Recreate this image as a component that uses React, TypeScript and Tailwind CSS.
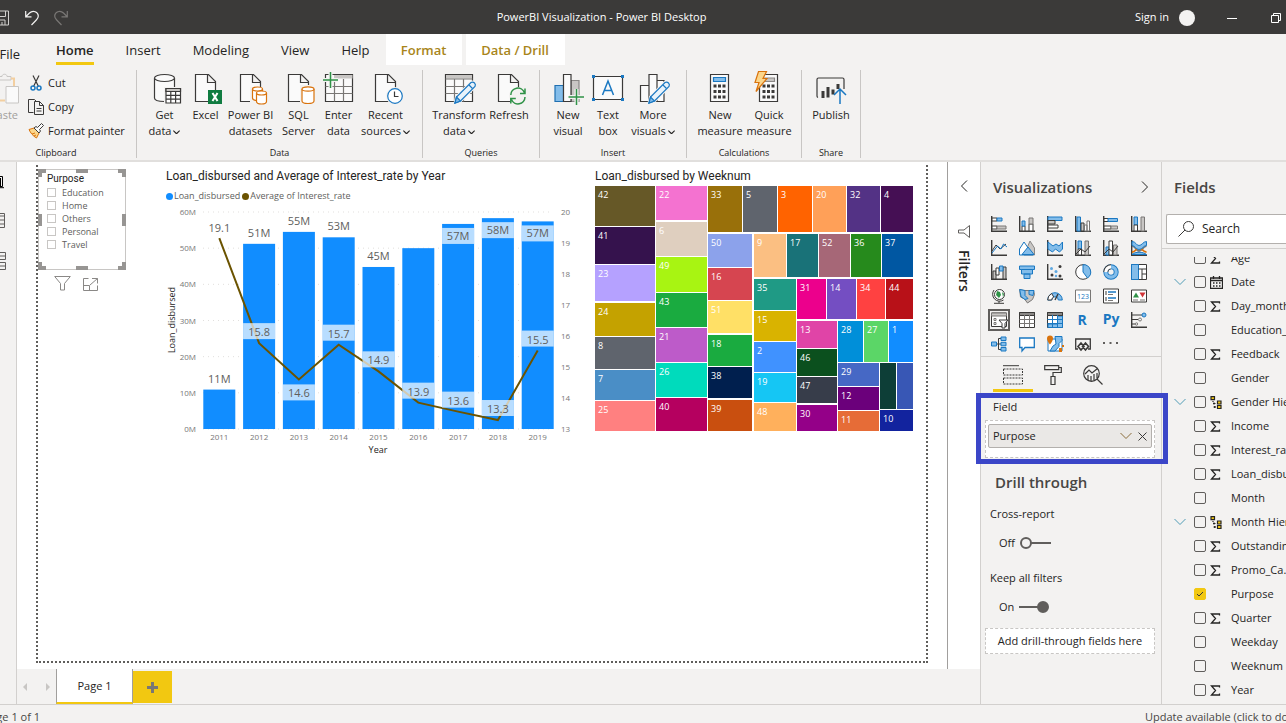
import type { ReactNode } from "react";

const DARK = "#3b3a39";
const BLUE = "#1a78c2";
const SKY = "#83bdea";
const GREY = "#c8c6c4";
const ORANGE = "#d9730d";
const GREEN = "#2f9247";

const TABS = ["Home", "Insert", "Modeling", "View", "Help"];

function Chevron({ className = "" }: { className?: string }) {
  return (
    <svg viewBox="0 0 12 8" fill="none" stroke="currentColor" className={className}>
      <path d="M.5 1l5.500 5.500L11.500 1" />
    </svg>
  );
}

function Big({ children }: { children: ReactNode }) {
  return (
    <svg width="32" height="32" viewBox="0 0 32 32" fill="none" stroke={DARK} strokeWidth="1.2" className="shrink-0 overflow-visible">
      {children}
    </svg>
  );
}

const page = <path d="M5.500 2.500h13l7 7v20h-20zM17.500 2.500v8h8" fill="#fafafa" />;

const calculator = (
  <>
    <path d="M6.500 2.500h18v27h-18z" fill="#fafafa" />
    <path d="M9.500 12.500h3v3h-3zM14 12.500h3v3h-3zM18.500 12.500h3v3h-3zM9.500 18h3v3h-3zM14 18h3v3h-3zM18.500 18h3v3h-3zM9.500 23.500h3v3h-3zM14 23.500h3v3h-3zM18.500 23.500h3v3h-3z" fill={DARK} stroke="none" />
  </>
);

const pencil = (
  <>
    <path d="M12 31l1.500-6L28 10.500q2-1 3.500.5t.5 3.500L17.500 29z" fill="#fff" stroke="#f3f2f1" strokeWidth="3" />
    <path d="M12 31l1.500-6L28 10.500q2-1 3.500.5t.5 3.500L17.500 29z" fill="#e8f3fb" stroke={BLUE} />
    <path d="M12 31l1.500-6 4 4zM26 13l3.500 3.500" fill={SKY} stroke={BLUE} />
  </>
);

const ICONS: Record<string, ReactNode> = {
  getData: (
    <Big>
      <path d="M5.500 6v20c0 2 4 3.500 10 3.500s10-1.500 10-3.500V6" fill="#fafafa" />
      <ellipse cx="15.500" cy="6" rx="10" ry="3.500" fill="#fafafa" />
      <path d="M15 15h18v18H15z" fill="#f3f2f1" stroke="none" />
      <path d="M17 16.500h14.500v14.500H17z" fill="#fff" />
      <path d="M17 16.500h14.500v3H17z" fill={GREY} />
      <path d="M17 23.300h14.500M17 27.100h14.500M21.800 19.500v11.500M26.600 19.500v11.500" />
    </Big>
  ),
  excel: (
    <Big>
      {page}
      <path d="M18 18h14v14H18z" fill="#107c41" stroke="none" />
      <path d="M22.500 21l5 8M27.500 21l-5 8" stroke="#fff" strokeWidth="2" />
    </Big>
  ),
  datasets: (
    <Big>
      {page}
      <path d="M15 15h18v18H15z" fill="#f3f2f1" stroke="none" />
      <g fill="#fff" stroke={ORANGE}>
        <path d="M17.500 17v9c0 1.500 2 2.500 5 2.500s5-1 5-2.500v-9" />
        <ellipse cx="22.500" cy="17" rx="5" ry="2" />
        <path d="M21.500 21v8.500c0 1.500 2 2.500 5 2.500s5-1 5-2.500V21" />
        <ellipse cx="26.500" cy="21" rx="5" ry="2" />
      </g>
    </Big>
  ),
  sql: (
    <Big>
      {page}
      <path d="M17 13h16v19H17z" fill="#f3f2f1" stroke="none" />
      <path d="M19 17v12c0 1.500 2.500 2.500 6 2.500s6-1 6-2.500V17" fill="#fff" stroke={ORANGE} />
      <ellipse cx="25" cy="17" rx="6" ry="2.200" fill="#fff" stroke={ORANGE} />
    </Big>
  ),
  enter: (
    <Big>
      <path d="M2.500 2.500h27v27h-27z" fill="#fafafa" />
      <path d="M11 3h18.500v3.500H11z" fill={GREY} stroke="none" />
      <path d="M2.500 14.500h27M2.500 21.500h27M11.500 7v22.500M20.500 7v22.500" stroke="#797775" />
      <path d="M7.500 0v16M0 8h15" stroke="#f3f2f1" strokeWidth="4" />
      <path d="M7.500 0v16M0 8h15" stroke={GREEN} strokeWidth="1.500" />
    </Big>
  ),
  recent: (
    <Big>
      {page}
      <circle cx="25" cy="24" r="9" fill="#f3f2f1" stroke="none" />
      <circle cx="25" cy="24" r="7.300" fill="#fff" stroke={BLUE} />
      <path d="M24.500 19.500v5h4" stroke={DARK} />
    </Big>
  ),
  transform: (
    <Big>
      <path d="M2.500 2.500h27v27h-27z" fill="#fafafa" />
      <path d="M3 3h26v3.500H3z" fill={GREY} stroke="none" />
      <path d="M2.500 7h27M2.500 14.500h27M2.500 21.500h27M11.500 7v22.500M20.500 7v22.500" stroke="#797775" />
      {pencil}
    </Big>
  ),
  refresh: (
    <Big>
      {page}
      <circle cx="25" cy="24" r="9" fill="#f3f2f1" stroke="none" />
      <path d="M17.800 23a7 7 0 0 1 13.500-2.500M32 16.500v5h-5M32 25a7 7 0 0 1-13.500 2.500M17.800 31.500v-5h5" stroke={GREEN} strokeWidth="1.500" />
    </Big>
  ),
  newVisual: (
    <Big>
      <path d="M19 8.500h8v21h-8z" fill={GREY} stroke="#8a8886" />
      <path d="M3 13.500h8.500v16H3z" fill={SKY} stroke="#1f6fb0" />
      <path d="M11.500 2.500H19v27h-7.500z" fill="#fafafa" />
      <path d="M24.500 17v16M17 25h15" stroke="#f3f2f1" strokeWidth="4" />
      <path d="M24.500 17v16M16.500 25H32" stroke={GREEN} strokeWidth="1.500" />
    </Big>
  ),
  textBox: (
    <Big>
      <path d="M1.500 4.500h29v23h-29z" fill="#fafafa" />
      <path d="M0 3h3v3H0zM29 3h3v3h-3zM0 26h3v3H0zM29 26h3v3h-3z" fill={BLUE} stroke="none" />
      <path d="M10.500 23l5.500-14 5.500 14M12.500 18.500h7" stroke={BLUE} strokeWidth="1.500" />
    </Big>
  ),
  moreVisuals: (
    <Big>
      <path d="M20 8.500h7v21h-7zM3.500 13.500H12v16H3.500zM12 2.500h8v27h-8z" fill="#fafafa" />
      {pencil}
    </Big>
  ),
  newMeasure: (
    <Big>
      {calculator}
      <path d="M9.500 5.500h12v4h-12z" fill={SKY} stroke={BLUE} />
    </Big>
  ),
  quickMeasure: (
    <Big>
      {calculator}
      <path d="M11 6h10.500v3.500H11z" fill={GREY} stroke="#8a8886" />
      <path d="M5.500-.5h8l-3.500 7h4L3 19.500 6 10.500H2z" fill="#fbd68b" stroke={ORANGE} />
    </Big>
  ),
  publish: (
    <Big>
      <path d="M3 25.500a1.500 1.500 0 0 1-1-1.500V7.500A1.500 1.500 0 0 1 3.500 6h24A1.500 1.500 0 0 1 29 7.500V17" />
      <path d="M8 19v7M13 15v10.500M18 17.500v5M23 12v5" strokeWidth="3" />
      <path d="M25 32V17M19 23l6-6 6 6" stroke={BLUE} strokeWidth="1.500" />
    </Big>
  ),
};

type Cmd = { icon: string; lines: string[]; width: string; menu?: boolean };

const GROUPS: { label: string; width: string; items: Cmd[] }[] = [
  {
    label: "Data",
    width: "w-[286px]",
    items: [
      { icon: "getData", lines: ["Get", "data"], width: "w-[42px]", menu: true },
      { icon: "excel", lines: ["Excel"], width: "w-[40px]" },
      { icon: "datasets", lines: ["Power BI", "datasets"], width: "w-[50px]" },
      { icon: "sql", lines: ["SQL", "Server"], width: "w-[46px]" },
      { icon: "enter", lines: ["Enter", "data"], width: "w-[34px]" },
      { icon: "recent", lines: ["Recent", "sources"], width: "w-[60px]", menu: true },
    ],
  },
  {
    label: "Queries",
    width: "w-[117px]",
    items: [
      { icon: "transform", lines: ["Transform", "data"], width: "w-[56px]", menu: true },
      { icon: "refresh", lines: ["Refresh"], width: "w-[44px]" },
    ],
  },
  {
    label: "Insert",
    width: "w-[147px]",
    items: [
      { icon: "newVisual", lines: ["New", "visual"], width: "w-[40px]" },
      { icon: "textBox", lines: ["Text", "box"], width: "w-[40px]" },
      { icon: "moreVisuals", lines: ["More", "visuals"], width: "w-[50px]", menu: true },
    ],
  },
  {
    label: "Calculations",
    width: "w-[115px]",
    items: [
      { icon: "newMeasure", lines: ["New", "measure"], width: "w-[50px]" },
      { icon: "quickMeasure", lines: ["Quick", "measure"], width: "w-[48px]" },
    ],
  },
  { label: "Share", width: "w-[59px]", items: [{ icon: "publish", lines: ["Publish"], width: "w-[48px]" }] },
];

function TitleBar() {
  return (
    <header className="flex h-[34px] shrink-0 items-center justify-between bg-[#3b3a39] pt-px text-[11px] text-white">
      <div className="flex w-[68px] items-center justify-between">
        <svg width="9" height="16" viewBox="7 0 9 16" fill="none" stroke="#d2d0ce">
          <path d="M1 1h14.500v14H1zM4 1v5.500h8.500V1M5 15v-5h7v5M9 12v3" />
        </svg>
        <svg width="14" height="16" viewBox="0 0 14 16" fill="none" stroke="#f3f2f1" strokeWidth="1.200">
          <path d="M.7 1v5.800h5.800M1 6.500L4.500 3C8-.5 13.300 2 13.300 6c0 2-1 3-2 4L6.500 15" />
        </svg>
        <svg width="14" height="16" viewBox="0 0 14 16" fill="none" stroke="#797775" strokeWidth="1.200">
          <path d="M13.300 1v5.800H7.500M13 6.500L9.500 3C6-.5.700 2 .700 6c0 2 1 3 2 4L7.500 15" />
        </svg>
      </div>
      <h1>PowerBI Visualization - Power BI Desktop</h1>
      <div className="flex items-center">
        <button>Sign in</button>
        <span className="ml-2.5 size-4 rounded-full bg-[#f3f2f1]" />
        <button aria-label="Minimize" className="ml-8">
          <svg width="10" height="10" viewBox="0 0 10 10" stroke="#fff"><path d="M0 5.500h10" /></svg>
        </button>
        <button aria-label="Restore" className="ml-[34px] mr-[5px]">
          <svg width="10" height="10" viewBox="0 0 10 10" fill="none" stroke="#fff"><path d="M.5 2.500h7v7h-7zM2.500 2.500v-2h7v7h-2" /></svg>
        </button>
      </div>
    </header>
  );
}

function TabStrip() {
  return (
    <nav className="flex h-[31px] shrink-0 text-[13px] leading-5">
      <div className="flex w-5 items-center justify-end pt-2">
        <button>File</button>
      </div>
      <div className="ml-9 flex gap-8">
        {TABS.map(t => (
          <button
            key={t}
            className={t === "Home" ? "border-b-[3px] border-[#f2c811] pt-1 font-semibold" : "border-b-[3px] border-transparent pt-1"}
          >
            {t}
          </button>
        ))}
      </div>
      <button className="ml-4 w-[76px] bg-white font-semibold text-[#a8851a]">Format</button>
      <button className="ml-1 w-[99px] bg-white font-semibold text-[#a8851a]">Data / Drill</button>
    </nav>
  );
}

function Clipboard() {
  return (
    <section className="flex w-[137px] shrink-0 flex-col border-r border-[#c8c6c4]">
      <div className="flex flex-1">
        <button disabled className="flex w-[20px] flex-col items-end overflow-hidden pt-0.5 text-[#a19f9d]">
          <svg width="21" height="32" viewBox="11 0 21 32" fill="none" stroke="#c8c6c4" className="shrink-0">
            <path d="M11 7V4.500h3c0-3 5-3 5 0h4V8H11M11 28.500h3" />
            <path d="M23 6.500h3V14M11 28.500h6" stroke="#f3cfa0" strokeWidth="2" />
            <path d="M18 14.500h12.500v16.500H18z" fill="#fafafa" />
          </svg>
          <span className="pr-0.5 pt-[3px] leading-4">Paste</span>
        </button>
        <div className="ml-2 flex flex-col pt-px">
          <button className="flex h-6 items-center gap-1">
            <svg width="16" height="16" viewBox="0 0 16 16" fill="none" stroke={DARK} strokeWidth="1.200">
              <path d="M5 .5l5.500 11M11 .5L5.500 11.500" />
              <circle cx="5" cy="13" r="2" stroke={BLUE} strokeWidth="1.500" />
              <circle cx="11" cy="13" r="2" stroke={BLUE} strokeWidth="1.500" />
            </svg>
            Cut
          </button>
          <button className="flex h-6 items-center gap-1">
            <svg width="16" height="16" viewBox="0 0 16 16" fill="none" stroke={DARK}>
              <path d="M5.500 13.500h-5V.5h6l1.500 1.500M6.500 2.500h5l4 4v9h-9zM11.500 2.500v4h4M8.500 9.500h5M8.500 12h5" />
            </svg>
            Copy
          </button>
          <button className="flex h-6 items-center gap-1">
            <svg width="16" height="16" viewBox="0 0 16 16" fill="none" stroke={DARK}>
              <path d="M1 6.500l5-1.500 5 5-2.500 5C5 13 2.500 10 1 6.500z" fill="#fbd68b" stroke={ORANGE} />
              <path d="M4 11l3-1M6 13l2-1" stroke={ORANGE} />
              <path d="M6 5l2-1.500 1.500 1L13.500.5l2 2-4 4 1 1.500-1.500 2z" fill="#fafafa" />
            </svg>
            Format painter
          </button>
        </div>
      </div>
      <h2 className="pr-6 text-center text-[9px] leading-[10px]">Clipboard</h2>
    </section>
  );
}

function Ribbon() {
  return (
    <div className="flex h-[97px] shrink-0 border-b-2 border-[#e1dfdd] pb-0.5 pt-[5px] text-[11px]">
      <Clipboard />
      {GROUPS.map(g => (
        <section key={g.label} className={`flex shrink-0 flex-col border-r border-[#c8c6c4] ${g.width}`}>
          <div className="flex flex-1 justify-center pt-0.5">
            {g.items.map(c => (
              <button key={c.icon} className={`flex flex-col items-center whitespace-nowrap leading-4 ${c.width}`}>
                {ICONS[c.icon]}
                <span className="pt-[3px]">{c.lines[0]}</span>
                <span className="flex items-center gap-0.5">
                  {c.lines[1]}
                  {c.menu && <Chevron className="mt-0.5 w-[7px] stroke-2" />}
                </span>
              </button>
            ))}
          </div>
          <h2 className="text-center text-[9px] leading-[10px]">{g.label}</h2>
        </section>
      ))}
    </div>
  );
}

function ViewNav() {
  return (
    <nav className="flex w-[17px] shrink-0 flex-col items-start gap-6 border-r border-[#d2d0ce] pt-[13px]">
      <button aria-label="Report">
        <svg width="6" height="14" viewBox="0 0 6 14" fill="none" stroke="#000"><path d="M0 1.500h2.500v10H0M.5 3v8M0 12.700h4" /></svg>
      </button>
      <button aria-label="Data">
        <svg width="6" height="15" viewBox="0 0 6 15" fill="none" stroke="#605e5c"><path d="M0 .5h4.500v14H0M0 3h4.500M0 7h4.500M0 11h4.500" /></svg>
      </button>
      <button aria-label="Model">
        <svg width="6" height="18" viewBox="0 0 6 18" fill="none" stroke="#605e5c"><path d="M0 .5h5.500v7H0M0 4h5.500M0 10.500h5.500v7H0M0 14h5.500" /></svg>
      </button>
    </nav>
  );
}

const PURPOSES = ["Education", "Home", "Others", "Personal", "Travel"];

function Slicer() {
  return (
    <div className="w-[88px] shrink-0 pt-1">
      <fieldset className="relative h-[101px] border border-[#c8c6c4] px-2 pt-px text-[9px]">
        <h3 className="font-[Roboto] text-[10px] leading-[15px] text-[#252423]">Purpose</h3>
        {PURPOSES.map(p => (
          <label key={p} className="flex h-[13px] items-center gap-[6px] text-[#605e5c]">
            <input type="checkbox" className="size-[9px] appearance-none border border-[#c8c6c4]" />
            {p}
          </label>
        ))}
        <span className="absolute -left-px -top-px size-2 border-l-4 border-t-4 border-[#979593]" />
        <span className="absolute -right-px -top-px size-2 border-r-4 border-t-4 border-[#979593]" />
        <span className="absolute -bottom-px -left-px size-2 border-b-4 border-l-4 border-[#979593]" />
        <span className="absolute -bottom-px -right-px size-2 border-b-4 border-r-4 border-[#979593]" />
        <span className="absolute -top-px left-[37px] h-1 w-3 bg-[#979593]" />
        <span className="absolute -bottom-px left-[37px] h-1 w-3 bg-[#979593]" />
        <span className="absolute -left-px top-[44px] h-3 w-1 bg-[#979593]" />
        <span className="absolute -right-px top-[44px] h-3 w-1 bg-[#979593]" />
      </fieldset>
      <div className="flex gap-3 pl-4 pt-1.5">
        <button aria-label="Filters on visual">
          <svg width="17" height="16" viewBox="0 0 17 16" fill="none" stroke="#8a8886"><path d="M.7.500h15.600L10.500 7.500v6.500h-4V7.500z" /></svg>
        </button>
        <button aria-label="Focus mode">
          <svg width="16" height="16" viewBox="0 0 16 16" fill="none" stroke="#8a8886"><path d="M5.500 2.500h-5v12h14V9.500M.5 9.500h6v5M9 2.500h5.500v5M14.500 2.500L7 9" /></svg>
        </button>
      </div>
    </div>
  );
}

// rateBelow puts the line's label under its point
const YEARS = [
  { year: 2011, loan: 10.9, loanLabel: "11M", rate: 19.16, rateLabel: "19.1" },
  { year: 2012, loan: 51.2, loanLabel: "51M", rate: 15.77, rateLabel: "15.8" },
  { year: 2013, loan: 54.5, loanLabel: "55M", rate: 14.6, rateLabel: "14.6", rateBelow: true },
  { year: 2014, loan: 53, loanLabel: "53M", rate: 15.72, rateLabel: "15.7" },
  { year: 2015, loan: 44.8, loanLabel: "45M", rate: 14.86, rateLabel: "14.9" },
  { year: 2016, loan: 50, loanLabel: "", rate: 13.85, rateLabel: "13.9" },
  { year: 2017, loan: 56.7, loanLabel: "57M", rate: 13.56, rateLabel: "13.6" },
  { year: 2018, loan: 58.3, loanLabel: "58M", rate: 13.29, rateLabel: "13.3" },
  { year: 2019, loan: 57.4, loanLabel: "57M", rate: 15.53, rateLabel: "15.5" },
];

const barX = (i: number) => 53.3 + i * 39.8;
const loanY = (v: number) => 223 - (v * 217) / 60;
const rateY = (v: number) => 223 - (v - 13) * 31;

function ComboChart() {
  return (
    <section className="w-[405px] shrink-0 pt-px">
      <h3 className="whitespace-nowrap font-[Roboto] text-[12px] leading-5 text-[#252423]">
        Loan_disbursed and Average of Interest_rate by Year
      </h3>
      <div className="flex h-5 items-center gap-0.5 text-[9px] text-[#605e5c]">
        <span className="flex items-center gap-px"><i className="size-[7px] rounded-full bg-[#118dff]" />Loan_disbursed</span>
        <span className="flex items-center gap-px"><i className="size-[7px] rounded-full bg-[#6b5300]" />Average of Interest_rate</span>
      </div>
      <svg width="405" height="252" viewBox="0 0 405 252" fontSize="8" fill="#777" textAnchor="middle">
        {[0, 10, 20, 30, 40, 50, 60].map(v => (
          <g key={v}>
            <path d={`M37 ${loanY(v)}H387`} stroke="#e1dfdd" strokeDasharray="1 4" />
            <text x="30" y={loanY(v) + 3} textAnchor="end">{v}M</text>
          </g>
        ))}
        {[13, 14, 15, 16, 17, 18, 19, 20].map(v => (
          <text key={v} x="395" y={rateY(v) + 3} textAnchor="start">{v}</text>
        ))}
        {YEARS.map((d, i) => (
          <g key={d.year}>
            <rect x={barX(i) - 16} y={loanY(d.loan)} width="32" height={223 - loanY(d.loan)} fill="#118dff" />
            <text x={barX(i)} y="234">{d.year}</text>
          </g>
        ))}
        <polyline points={YEARS.map((d, i) => `${barX(i)},${rateY(d.rate)}`).join(" ")} fill="none" stroke="#6b5300" strokeWidth="2" />
        <g fontSize="11" fill="#605e5c">
          {YEARS.map((d, i) => {
            const inside = d.loan > 56;
            const top = inside ? loanY(d.loan) + 4 : loanY(d.loan) - 19;
            const rateTop = rateY(d.rate) + (d.rateBelow ? 5 : -20);
            return (
              <g key={d.year}>
                {inside && <rect x={barX(i) - 16} y={top} width="32" height="16" fill="#fff" opacity=".7" />}
                <text x={barX(i)} y={top + 12}>{d.loanLabel}</text>
                {i > 0 && <rect x={barX(i) - 16} y={rateTop} width="32" height="16" fill="#fff" opacity=".7" />}
                <text x={barX(i)} y={rateTop + 13} dy={i > 0 ? 0 : 1}>{d.rateLabel}</text>
              </g>
            );
          })}
        </g>
        <g fontSize="9" fill="#252423">
          <text x="212" y="247">Year</text>
          <text transform="translate(9 114) rotate(-90)">Loan_disbursed</text>
        </g>
      </svg>
    </section>
  );
}

// label, left, top, right, bottom, colour
const TILES: [string, number, number, number, number, string][] = [
  ["42", 0, 0, 60, 40, "#665827"], ["41", 0, 41, 60, 78, "#35124d"], ["23", 0, 79, 60, 115, "#b5a1ff"],
  ["24", 0, 117, 60, 150, "#c4a200"], ["8", 0, 151, 60, 183, "#5f646d"], ["7", 0, 184, 60, 214, "#4a8ec6"],
  ["25", 0, 215, 60, 245, "#ff8080"],
  ["22", 61, 0, 112, 34, "#f472d0"], ["6", 61, 36, 112, 70, "#dfcfbf"], ["49", 61, 71, 112, 106, "#a8f412"],
  ["43", 61, 107, 112, 141, "#1aab40"], ["21", 61, 142, 112, 176, "#bd5bc9"], ["26", 61, 177, 112, 211, "#00dbbc"],
  ["40", 61, 212, 112, 245, "#b5005f"],
  ["33", 113, 0, 147, 46, "#99700a"], ["5", 148, 0, 182, 46, "#5f646d"], ["3", 183, 0, 217, 46, "#ff6300"],
  ["20", 218, 0, 251, 46, "#ffa058"], ["32", 252, 0, 285, 46, "#533285"], ["4", 286, 0, 318, 46, "#450f54"],
  ["50", 113, 48, 157, 81, "#8ca2eb"], ["16", 113, 82, 157, 114, "#d64550"], ["51", 113, 115, 157, 147, "#ffe066"],
  ["18", 113, 149, 157, 180, "#1aab40"], ["38", 113, 181, 157, 212, "#001f4e"], ["39", 113, 214, 157, 245, "#c94f0f"],
  ["9", 159, 48, 191, 91, "#fbbf82"], ["17", 192, 48, 223, 91, "#197278"], ["52", 224, 48, 255, 91, "#a66777"],
  ["36", 256, 48, 286, 91, "#268a1c"], ["37", 287, 48, 318, 91, "#0057a2"],
  ["35", 159, 93, 201, 124, "#1f9a85"], ["15", 159, 125, 201, 155, "#d9b300"], ["2", 159, 156, 201, 186, "#4092ff"],
  ["19", 159, 187, 201, 216, "#15c6f4"], ["48", 159, 217, 201, 245, "#ffb05c"],
  ["31", 202, 93, 231, 133, "#ec008c"], ["14", 232, 93, 261, 133, "#744ec2"], ["34", 262, 93, 290, 133, "#ff4141"],
  ["44", 291, 93, 318, 133, "#b81118"],
  ["13", 202, 135, 242, 162, "#e044a7"], ["46", 202, 163, 242, 190, "#0b501e"], ["47", 202, 191, 242, 217, "#373d4a"],
  ["30", 202, 219, 242, 245, "#940088"],
  ["28", 243, 135, 268, 176, "#008fd9"], ["27", 269, 135, 293, 176, "#5bd667"], ["1", 294, 135, 318, 176, "#118dff"],
  ["29", 243, 177, 284, 200, "#4668c5"], ["12", 243, 201, 284, 224, "#6b007b"], ["11", 243, 225, 284, 245, "#e66c37"],
  ["", 285, 177, 301, 223, "#0d3e37"], ["", 302, 177, 318, 223, "#3857b5"], ["10", 285, 224, 318, 245, "#12239e"],
];

function Treemap() {
  return (
    <section className="w-[318px] shrink-0 pt-px">
      <h3 className="whitespace-nowrap font-[Roboto] text-[12px] leading-5 text-[#252423]">Loan_disbursed by Weeknum</h3>
      <svg width="318" height="246" viewBox="0 0 318 246" fontSize="9" fontWeight="500" fill="#fff">
        {TILES.map(([label, x, y, x2, y2, color]) => (
          <g key={`${x}-${y}`}>
            <rect x={x} y={y} width={x2 - x} height={y2 - y} fill={color} />
            <text x={x + 3} y={y + 12}>{label}</text>
          </g>
        ))}
      </svg>
    </section>
  );
}

function Report() {
  return (
    <main className="flex min-w-0 flex-1 flex-col">
      <div className="flex min-h-0 flex-1 bg-white">
        <div className="mb-1.5 ml-[19px] mr-[19px] mt-[3px] flex min-w-0 flex-1 border-2 border-t-0 border-dotted border-[#605e5c]">
          <Slicer />
          <div className="ml-10 flex gap-6">
            <ComboChart />
            <Treemap />
          </div>
        </div>
        <aside className="flex w-[33px] shrink-0 flex-col items-center border-l border-[#a19f9d] pt-[20px]">
          <button aria-label="Expand filters"><Chevron className="w-3 rotate-90 text-[#252423]" /></button>
          <svg width="12" height="13" viewBox="0 0 12 13" fill="none" stroke="#605e5c" className="mt-[35px]"><path d="M11.500.5v12L6 8H.5V5H6z" /></svg>
          <h2 className="mt-3 text-[14px] font-semibold leading-4 [writing-mode:vertical-rl]">Filters</h2>
        </aside>
      </div>
      <div className="flex h-[35px] shrink-0 text-[11px]">
        <div className="flex w-[39px] items-center justify-between px-1.5 text-[#c8c6c4]">
          <svg width="4" height="8" viewBox="0 0 4 8" fill="currentColor"><path d="M4 0v8L0 4z" /></svg>
          <svg width="4" height="8" viewBox="0 0 4 8" fill="currentColor"><path d="M0 0v8l4-4z" /></svg>
        </div>
        <button className="w-[77px] border-x border-b-2 border-x-[#a19f9d] border-b-[#f2c811] bg-white pt-0.5">Page 1</button>
        <button aria-label="New page" className="mb-px mt-0.5 flex w-[39px] items-center justify-center bg-[#f2c811]">
          <svg width="11" height="11" viewBox="0 0 11 11" stroke="#797775" strokeWidth="3"><path d="M5.500 0v11M0 5.500h11" /></svg>
        </button>
      </div>
    </main>
  );
}

const axis = <path d="M.7 0v15.300H16" stroke={DARK} strokeWidth="1.400" />;

const VISUALS: { name: string; art: ReactNode }[] = [
  { name: "Stacked bar chart", art: <>{axis}<path d="M1 2h5v3H1zM1 10h5v3H1z" fill="#fff" stroke={DARK} /><path d="M6 2h5v3H6z" fill={SKY} stroke={BLUE} /><path d="M6 10h9v3H6z" fill={GREY} stroke="#797775" /></> },
  { name: "Stacked column chart", art: <>{axis}<path d="M3 10h3v5H3zM10 8h4v7h-4z" fill="#fff" stroke={DARK} /><path d="M3 5h3v5H3z" fill={SKY} stroke={BLUE} /><path d="M10 2h4v6h-4z" fill={GREY} stroke="#797775" /></> },
  { name: "Clustered bar chart", art: <>{axis}<path d="M1 1h14v3.500H1z" fill={SKY} stroke={BLUE} /><path d="M1 4.500h7V8H1z" fill={GREY} stroke={DARK} /><path d="M1 9h10v3H1z" fill="#fff" stroke={DARK} /></> },
  { name: "Clustered column chart", art: <>{axis}<path d="M2 1h3.500v14H2z" fill={SKY} stroke={BLUE} /><path d="M6 7h3v8H6z" fill={GREY} stroke={DARK} /><path d="M9.500 9h2.500v6H9.500zM12 5h2.500v10H12z" fill="#fff" stroke="#797775" /></> },
  { name: "100% stacked bar chart", art: <>{axis}<path d="M1 2.500h5v3H1zM1 10h7v3H1z" fill="#fff" stroke={DARK} /><path d="M5 2.500h9.500v3H5z" fill={SKY} stroke={BLUE} /><path d="M8 10h6.500v3H8z" fill={GREY} stroke="#797775" /></> },
  { name: "100% stacked column chart", art: <>{axis}<path d="M3 1h3.500v8H3z" fill={SKY} stroke={BLUE} /><path d="M3 9h3.500v6H3z" fill="#fff" stroke={DARK} /><path d="M10 1h3.500v14H10z" fill={GREY} stroke="#797775" /></> },
  { name: "Line chart", art: <>{axis}<path d="M1 11l4-6 4 4 6-5" stroke={DARK} /><path d="M1 13L6.500 6 10 9l2.500-5L16 7" stroke={BLUE} /></> },
  { name: "Area chart", art: <><path d="M5 15l6-14 4.500 7v7z" fill={GREY} stroke="#8a8886" /><path d="M.5 15V9L5 2l9 13z" fill="#fff" stroke={BLUE} /><path d="M3 14.500L9 7l6 7.500z" fill={SKY} stroke={BLUE} /></> },
  { name: "Stacked area chart", art: <>{axis}<path d="M1 2l5 4 3-2 3 2 3.500-4v7l-3 3-4-3-3 3L1 9z" fill={SKY} stroke={BLUE} /></> },
  { name: "Line and stacked column chart", art: <>{axis}<path d="M3 1h3.500v8H3z" fill={SKY} stroke={BLUE} /><path d="M3 9h3.500v6H3z" fill="#fff" stroke={DARK} /><path d="M10 1h3.500v14H10z" fill={GREY} stroke="#797775" /><path d="M1 14l5-5 4 3 5-6" stroke={DARK} /></> },
  { name: "Line and clustered column chart", art: <>{axis}<path d="M3 7h3v8H3z" fill={SKY} stroke={BLUE} /><path d="M6 1h3.500v14H6z" fill="#fff" stroke={DARK} /><path d="M10.500 5H14v10h-3.500z" fill={GREY} stroke="#797775" /><path d="M1 14l5-5 4 3 5-6" stroke={DARK} /></> },
  { name: "Ribbon chart", art: <>{axis}<path d="M1 6c4 0 4 5 7 5s4-5 7.500-5" stroke="#797775" strokeWidth="2" /><path d="M1 12c4 0 4-4 7-4s4 4 7.500 4" stroke={ORANGE} strokeWidth="1.800" /><path d="M1 1.500c4 0 4 4 7 4s4-4 7.500-4v4c-3 0-4 4-7.500 4s-4-4-7-4z" fill={SKY} stroke={BLUE} /><path d="M1 14.500c3-3 11-3 14.500 0z" fill={SKY} stroke={BLUE} /></> },
  { name: "Waterfall chart", art: <>{axis}<path d="M2 7h3v8H2zM12 3h3v12h-3z" fill={GREY} stroke={DARK} /><path d="M5 4h3v7H5z" fill="#fff" stroke={DARK} /><path d="M8.500 2H12v5H8.500z" fill={SKY} stroke={BLUE} /></> },
  { name: "Funnel chart", art: <><path d="M.5 2h15v3.500H.5z" fill={SKY} stroke={BLUE} /><path d="M2.500 5.500h11V10h-11zM5 10h6v4.500H5z" fill={SKY} stroke={BLUE} /></> },
  { name: "Scatter chart", art: <>{axis}<g stroke="none"><g fill={DARK}><circle cx="13" cy="2.500" r="1.500" /><circle cx="5" cy="11" r="1.500" /><circle cx="13" cy="12" r="1.500" /></g><g fill="#5fa8e0"><circle cx="4.500" cy="4.500" r="1.500" /><circle cx="9" cy="7.500" r="1.500" /><circle cx="9" cy="12" r="1.200" /></g></g></> },
  { name: "Pie chart", art: <><circle cx="8" cy="8" r="7.300" fill="#fff" stroke={DARK} /><path d="M8 .7V8l4.500 6A7.300 7.300 0 0 0 8 .7z" fill={SKY} stroke={BLUE} /></> },
  { name: "Donut chart", art: <><circle cx="8" cy="8" r="5.200" stroke={BLUE} strokeWidth="5" /><circle cx="8" cy="8" r="5.200" stroke={SKY} strokeWidth="3.200" /><path d="M8 2.800A5.200 5.200 0 0 0 2.800 8" stroke={DARK} strokeWidth="5" /><path d="M8 2.800A5.200 5.200 0 0 0 2.800 8" stroke="#fff" strokeWidth="3.200" /></> },
  { name: "Treemap", art: <><path d="M.5.500h15v15H.5z" fill="#fff" stroke={DARK} /><path d="M.5.500h7v15h-7z" fill={SKY} stroke={BLUE} /><path d="M7.500 5h8M11 5v10.500M11 10h4.500" stroke={DARK} /></> },
  { name: "Map", art: <><circle cx="8.500" cy="6.500" r="5" fill="#fff" stroke={DARK} /><path d="M6 3l3 1 1 3-2 3-3-3zM11 4l2 2-1 3z" fill={GREEN} stroke="none" /><path d="M3 2a7 7 0 0 0 9.500 10M8 13v2M3 15.300h10" stroke={DARK} /></> },
  { name: "Filled map", art: <><path d="M.7 1.500l4.300 1h9.500l1 4-2 5-5 3.500-3-4-4-2z" fill={GREY} stroke="#797775" /><path d="M.7 1.500L6 2.500v5l3 3-3 1-4-3zM10 2.500h5l-1 5-4-1z" fill={SKY} stroke={BLUE} /></> },
  { name: "Gauge", art: <><path d="M.7 12a7.300 7.300 0 0 1 14.600 0h-4a3.300 3.300 0 0 0-6.600 0z" fill={SKY} stroke={BLUE} /><path d="M.7 12a7.300 7.300 0 0 1 4-6.500l2 3.500a3.300 3.300 0 0 0-2 3z" fill="#fff" stroke={DARK} /><path d="M8 12l3-6" stroke={DARK} strokeWidth="1.400" /></> },
  { name: "Card", art: <><path d="M.5 2h15v12H.5z" fill="#fff" stroke="#797775" /><text x="8" y="10.500" textAnchor="middle" fontSize="7" fill={BLUE} stroke="none">123</text></> },
  { name: "Multi-row card", art: <><path d="M.5 1h15v14H.5z" fill="#fff" stroke={DARK} /><path d="M3 3v4M3 9v4" stroke={DARK} /><path d="M5 4h8M5 10h8" stroke={BLUE} strokeWidth="1.500" /><path d="M5 6.500h5M5 12.500h5" stroke="#797775" /></> },
  { name: "KPI", art: <><path d="M.5 2h15v12H.5z" fill="#fff" stroke={DARK} /><path d="M2 9.500L5 4.500l3 5z" fill={GREEN} stroke="none" /><path d="M8.500 4.500h6l-3 5z" fill="#d13438" stroke="none" /><path d="M2 12h5M9 12h5" stroke="#797775" /></> },
  { name: "Slicer", art: <><path d="M.5 1h15v13.500H.5z" fill="#fff" stroke={DARK} /><path d="M.5 1h15v3H.5z" fill={GREY} stroke="#797775" /><path d="M3 6.500h2v2H3zM3 10.500h2v2H3z" stroke="#797775" /><path d="M8 8h9l-3 3.500V16h-3v-4.500z" fill="#fff" stroke={DARK} /></> },
  { name: "Table", art: <><path d="M.5.500h15v15H.5z" fill="#fff" stroke={DARK} /><path d="M.5.500h15v3H.5z" fill="#8a8886" stroke={DARK} /><path d="M.5 7.500h15M.5 11.500h15M5.500 3v12.500M10.500 3v12.500" stroke="#797775" /></> },
  { name: "Matrix", art: <><path d="M.5.500h15v15H.5z" fill="#fff" stroke={DARK} /><path d="M10.500 4h5v11.500H1V12h9.500z" fill={SKY} stroke={BLUE} /><path d="M.5.500h15v3H.5z" fill="#8a8886" stroke={DARK} /><path d="M.5 7.500h15M.5 11.500h15M5.500 3v12.500M10.500 3v12.500" stroke={BLUE} /></> },
  { name: "R script visual", art: <text x="7" y="13" textAnchor="middle" fontSize="14" fontWeight="700" fill={BLUE} stroke="none">R</text> },
  { name: "Python visual", art: <text x="8" y="12" textAnchor="middle" fontSize="14" fontWeight="700" fill={BLUE} stroke="none">Py</text> },
  { name: "Key influencers", art: <>{axis}<path d="M1 3h10M1 7.500h6M1 12h3" stroke={DARK} /><circle cx="13" cy="3" r="2" fill={SKY} stroke={BLUE} /><circle cx="9" cy="7.500" r="1.500" stroke="#797775" /><circle cx="5.500" cy="12" r="1.200" stroke="#797775" /></> },
  { name: "Decomposition tree", art: <><path d="M5 8h5M7.500 2.500v11M7.500 2.500H10M7.500 13.500H10" stroke={DARK} /><path d="M.5 6h5v4h-5zM10 1h5v3.500h-5zM10 6.300h5v3.500h-5zM10 11.500h5V15h-5z" fill={SKY} stroke={BLUE} /></> },
  { name: "Q&A", art: <path d="M.7 2h14.600v9.500H6L3 15v-3.500H.7z" fill="#fff" stroke={BLUE} strokeWidth="1.300" /> },
  { name: "ArcGIS map", art: <><path d="M1 3h14v12H1z" fill="#fff" stroke={BLUE} /><path d="M8 .500h7v4l-3 3v3l-4 4.500H3l3-5 3-2z" fill={SKY} stroke={BLUE} /><path d="M3-.5a3 3 0 0 1 3 3C6 5 3 8.500 3 8.500S0 5 0 2.500a3 3 0 0 1 3-3zM12 12h3v4h-3zM15 9h2v2h-2z" fill={ORANGE} stroke="none" /></> },
  { name: "Power Apps visual", art: <><path d="M3 13H.7V3h14.600v10H13" stroke={DARK} strokeWidth="1.300" /><path d="M6 7l3 3.500L6 14l-3-3.500zM10.500 7l3 3.500-3 3.500-3-3.500z" stroke={DARK} strokeWidth="1.600" /></> },
  { name: "More visuals", art: <path d="M0 6h2v2H0zM6.500 6h2v2h-2zM13 6h2v2h-2z" fill="#605e5c" stroke="none" /> },
];

function Toggle({ label, on }: { label: string; on?: boolean }) {
  return (
    <div className="pl-[9px] pt-[13px]">
      <label className="flex h-4 items-center gap-[5px]">
        <input type="checkbox" role="switch" aria-label={label} defaultChecked={on} className="sr-only" />
        {on ? "On" : "Off"}
        <svg width="31" height="12" viewBox="0 0 31 12" fill="none" stroke="#605e5c" strokeWidth="2">
          {on ? <><path d="M0 6h20" /><circle cx="24" cy="6" r="5" fill="#605e5c" /></> : <><circle cx="6" cy="6" r="5" /><path d="M11 6h20" /></>}
        </svg>
      </label>
    </div>
  );
}

function Visualizations() {
  return (
    <aside className="flex w-[181px] shrink-0 flex-col border-l border-[#d2d0ce] text-[11px]">
      <div className="flex h-[50px] shrink-0 items-center justify-between pl-3 pr-[10px]">
        <h2 className="text-[15px] font-semibold text-[#484644]">Visualizations</h2>
        <button aria-label="Collapse"><Chevron className="w-3 -rotate-90 text-[#252423]" /></button>
      </div>
      <div className="ml-1 grid w-[168px] grid-cols-6">
        {VISUALS.map(v => (
          <button
            key={v.name}
            aria-label={v.name}
            className={v.name === "Slicer" ? "mx-[3px] my-px flex h-[22px] items-center justify-center border-2 border-[#605e5c]" : "flex h-6 items-center justify-center"}
          >
            <svg width="16" height="16" viewBox="0 0 16 16" fill="none" className="shrink-0 overflow-visible">{v.art}</svg>
          </button>
        ))}
      </div>
      <div className="mb-px flex h-9 shrink-0 border-t border-[#d2d0ce] pl-3">
        <button aria-label="Fields" className="flex w-10 justify-center border-b-[3px] border-[#f2c811] pt-2">
          <svg width="20" height="20" viewBox="0 0 20 20" fill="none" stroke={DARK} strokeDasharray="2 1">
            <path d="M.5 4h19v6H.5zM.5 13h19v6H.5z" /><path d="M0 .7h16" strokeDasharray="none" />
          </svg>
        </button>
        <button aria-label="Format" className="flex w-10 justify-center pt-2">
          <svg width="18" height="20" viewBox="0 0 18 20" fill="none" stroke={DARK} strokeWidth="1.200">
            <path d="M.7.700h14v4H.7zM14.700 2.500h2.600v5H9v4M7 11.500h4v8H7z" />
          </svg>
        </button>
        <button aria-label="Analytics" className="flex w-10 justify-center pt-2">
          <svg width="20" height="20" viewBox="0 0 20 20" fill="none" stroke={DARK} strokeWidth="1.200">
            <circle cx="8.500" cy="8.500" r="7.800" /><path d="M14 14l5.500 5.500M2 9l4-4 3 3 5.500-4.500M5 10v5M8 11v5M11 9v6M14 8v5" />
          </svg>
        </button>
      </div>
      <section className="relative h-[71px] shrink-0 pl-1 pr-1.5">
        <h3 className="pl-2 pt-[5px] leading-[18px]">Field</h3>
        <div className="mt-1 h-[38px] border border-dashed border-[#c8c6c4] bg-white p-[3px] pl-[2px] pr-[2px]">
          <div className="flex h-6 items-center rounded-xs border border-[#b3b0ad] bg-[#eae8e6] pl-1 pr-1">
            <span className="flex-1">Purpose</span>
            <button aria-label="Field options"><Chevron className="w-3 text-[#8a6d3b]" /></button>
            <button aria-label="Remove field" className="ml-1.5">
              <svg width="9" height="9" viewBox="0 0 9 9" stroke={DARK}><path d="M.5.500l8 8M8.500.500l-8 8" /></svg>
            </button>
          </div>
        </div>
        <div className="pointer-events-none absolute -left-[5px] -right-[7px] inset-y-0 z-10 border-[5px] border-[#3b46c8]" />
      </section>
      <section className="pl-1 pr-1.5">
        <h2 className="pl-2.5 pt-2 text-[15px] font-semibold leading-5 text-[#484644]">Drill through</h2>
        <div className="px-[5px]">
          <h3 className="pt-3.5 leading-4">Cross-report</h3>
          <Toggle label="Cross-report" />
          <h3 className="pt-[19px] leading-4">Keep all filters</h3>
          <Toggle label="Keep all filters" on />
        </div>
        <p className="mt-[13px] whitespace-nowrap border border-dashed border-[#c8c6c4] bg-white text-center leading-6">Add drill-through fields here</p>
      </section>
    </aside>
  );
}

type Kind = "sum" | "date" | "hierarchy";

const FIELDS: { name: string; kind?: Kind; checked?: boolean }[] = [
  { name: "Age", kind: "sum" },
  { name: "Date", kind: "date" },
  { name: "Day_month", kind: "sum" },
  { name: "Education_level" },
  { name: "Feedback", kind: "sum" },
  { name: "Gender" },
  { name: "Gender Hierarchy", kind: "hierarchy" },
  { name: "Income", kind: "sum" },
  { name: "Interest_rate", kind: "sum" },
  { name: "Loan_disbursed", kind: "sum" },
  { name: "Month" },
  { name: "Month Hierarchy", kind: "hierarchy" },
  { name: "Outstanding", kind: "sum" },
  { name: "Promo_Ca...", kind: "sum" },
  { name: "Purpose", checked: true },
  { name: "Quarter", kind: "sum" },
  { name: "Weekday" },
  { name: "Weeknum" },
  { name: "Year", kind: "sum" },
];

function FieldIcon({ kind }: { kind?: Kind }) {
  return (
    <svg width="13" height="13" viewBox="0 0 13 13" fill="none" stroke="#252423" className="ml-1 mr-2 shrink-0">
      {kind === "sum" && <path d="M9.500 3.500v-1.500h-8l4 4.500-4 4.500h8V9.500" strokeWidth="1.300" />}
      {kind === "date" && <path d="M.5 2h12v10.500H.5zM.5 4.500h12M3.500 0v3M9.500 0v3M3 7h1.500M6 7h1.500M9 7h1.500M3 10h1.500M6 10h1.500M9 10h1.500" strokeWidth="1.300" />}
      {kind === "hierarchy" && <path d="M1 .7h3.500v3H1zM7.500 5H11v3H7.500zM7.500 9.500H11v3H7.500zM3 5v1M3 7.500h2.500M4 6.500v2M3.500 11H6M4.700 10v2" fill="#f2c811" strokeWidth="1.200" />}
    </svg>
  );
}

function Fields() {
  return (
    <aside className="flex w-[125px] shrink-0 flex-col border-l border-[#d2d0ce] text-[11px]">
      <h2 className="flex h-[50px] shrink-0 items-center pl-3 text-[15px] font-semibold text-[#484644]">Fields</h2>
      <div className="shrink-0 border-b border-[#d2d0ce] pb-1 pl-1 pt-0.5">
        <label className="flex h-[30px] items-center gap-2 rounded-l-xs border border-r-0 border-[#b3b0ad] bg-white pl-[11px]">
          <svg width="16" height="16" viewBox="0 0 16 16" fill="none" stroke={DARK} className="shrink-0"><circle cx="10.500" cy="5.500" r="5" /><path d="M7 9L.5 15.500" /></svg>
          <input placeholder="Search" aria-label="Search" className="w-full min-w-0 text-[12px] placeholder:text-[#252423]" />
        </label>
      </div>
      <ul className="mb-0.5 mt-2 flex min-h-0 flex-1 flex-col justify-end overflow-hidden">
        {FIELDS.map(f => (
          <li key={f.name} className="flex h-6 shrink-0 items-center pl-3">
            <span className="w-5 shrink-0">
              {(f.kind === "date" || f.kind === "hierarchy") && <Chevron className="w-3 text-[#4f9bb5]" />}
            </span>
            <label className="flex items-center whitespace-nowrap">
              <span className="relative flex shrink-0">
                <input
                  type="checkbox"
                  defaultChecked={f.checked}
                  className="size-3 appearance-none rounded-xs border border-[#605e5c] checked:border-[#f2c811] checked:bg-[#f2c811]"
                />
                {f.checked && <svg viewBox="0 0 12 12" fill="none" stroke={DARK} className="absolute inset-0"><path d="M3 6l2 2 4-4" /></svg>}
              </span>
              <FieldIcon kind={f.kind} />
              {f.name}
            </label>
          </li>
        ))}
      </ul>
    </aside>
  );
}

export default function App() {
  return (
    <div className="flex h-screen flex-col overflow-hidden bg-[#f3f2f1] font-['Open_Sans',sans-serif] text-[#252423]">
      <TitleBar />
      <TabStrip />
      <Ribbon />
      <div className="flex min-h-0 flex-1">
        <ViewNav />
        <Report />
        <Visualizations />
        <Fields />
      </div>
      <footer className="flex h-[19px] shrink-0 justify-between border-t border-[#d2d0ce] pt-0.5 text-[11px] leading-5 text-[#484644]">
        <div className="flex w-10 justify-end overflow-hidden whitespace-nowrap">Page 1 of 1</div>
        <div className="w-[141px] overflow-hidden whitespace-nowrap">Update available (click to download)</div>
      </footer>
    </div>
  );
}
